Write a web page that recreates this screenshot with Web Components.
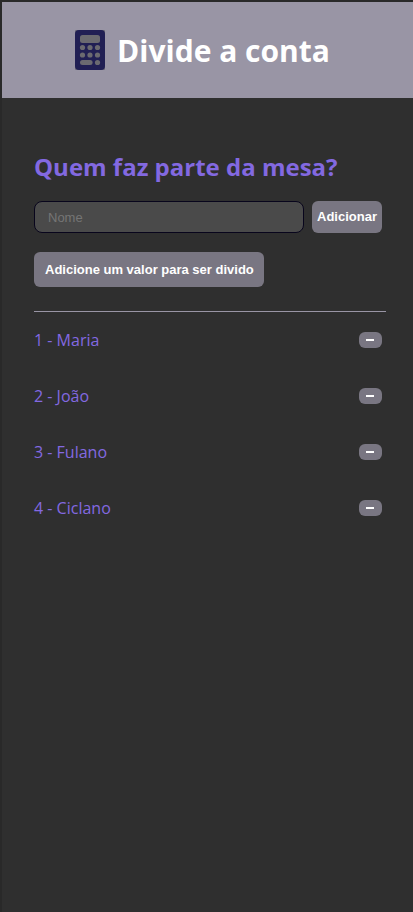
<!DOCTYPE html>
<html lang="pt-BR">
<head>
<meta charset="utf-8">
<meta name="viewport" content="width=device-width, initial-scale=1">
<title>Divide a conta</title>
<style>
  :root {
    --bg: #2f2f2f;
    --edge: #292929;
    --header: #9995a5;
    --accent: #8369e1;
    --button: #797682;
    --field: #4a4a4a;
    --line: #9995a5;
  }
  html { background: var(--bg); }
  body {
    margin: 0;
    min-height: 100vh;
    box-sizing: border-box;
    border: solid var(--edge);
    border-width: 2px 0 0 2px;
    font-family: "Open Sans", "Noto Sans", sans-serif;
    font-size: 16px;
    color: var(--accent);
  }
</style>
</head>
<body>
<bill-app></bill-app>
<script>
class BillElement extends HTMLElement {
  constructor() {
    super();
    this.attachShadow({ mode: "open" }).innerHTML = this.constructor.markup;
  }
}

customElements.define("calculator-icon", class extends BillElement {
  static markup = `
    <style>
      :host { display: block; width: 30px; height: 40px; }
      svg { display: block; width: 100%; height: 100%; }
    </style>
    <svg viewBox="0 0 30 40" aria-hidden="true">
      <rect width="30" height="40" rx="1" fill="#6e6c78"/>
      <rect width="30" height="40" rx="4" fill="#211f54"/>
      <g fill="#6b6a70">
        <rect x="5" y="5" width="20" height="8" rx="2.5"/>
        <circle cx="7.5" cy="17.5" r="2.6"/><circle cx="15" cy="17.5" r="2.6"/><circle cx="22.5" cy="17.5" r="2.6"/>
        <circle cx="7.5" cy="25" r="2.6"/><circle cx="15" cy="25" r="2.6"/><circle cx="22.5" cy="25" r="2.6"/>
        <rect x="5" y="30" width="12.6" height="5" rx="2.5"/>
        <circle cx="22.5" cy="32.5" r="2.6"/>
      </g>
    </svg>`;
});

customElements.define("app-header", class extends BillElement {
  static markup = `
    <style>
      :host { display: block; background: var(--header); color: #fff; }
      header { display: flex; align-items: center; justify-content: center; gap: 12px; min-height: 96px; padding-right: 10px; }
      h1 { margin: 0; padding-top: 2px; font-size: 30px; line-height: 44px; font-weight: 700; white-space: nowrap; }
    </style>
    <header><calculator-icon></calculator-icon><h1><slot></slot></h1></header>`;
});

customElements.define("action-button", class extends BillElement {
  static markup = `
    <style>
      :host { display: inline-block; }
      button {
        display: block; width: 100%; height: 100%; box-sizing: border-box; margin: 0; border: 0;
        padding: var(--pad, 0 12px); border-radius: var(--radius, 6px);
        background: var(--button); color: #fff;
        font: bold 13px/16px "Liberation Sans", Arial, sans-serif; white-space: nowrap; cursor: pointer;
      }
    </style>
    <button type="button"><slot></slot></button>`;
  connectedCallback() {
    if (this.hasAttribute("label"))
      this.shadowRoot.querySelector("button").setAttribute("aria-label", this.getAttribute("label"));
  }
});

customElements.define("person-form", class extends BillElement {
  static markup = `
    <style>
      :host { display: block; }
      form { display: flex; gap: 8px; padding-right: 4px; }
      input {
        flex: 1; min-width: 0; height: 32px; box-sizing: border-box; margin: 0; padding: 0 13px;
        border: 1px solid #08051c; border-radius: 8px; background: var(--field); color: #fff;
        font: 13px/16px "Liberation Sans", Arial, sans-serif;
      }
      input::placeholder { color: #757575; opacity: 1; }
      action-button { height: 32px; --pad: 0 5px; }
    </style>
    <form><input type="text" placeholder="Nome" aria-label="Nome"><action-button>Adicionar</action-button></form>`;
});

customElements.define("person-row", class extends BillElement {
  static markup = `
    <style>
      :host { display: flex; align-items: center; justify-content: space-between; height: 24px; padding-right: 4px; line-height: 24px; }
      action-button { width: 23px; height: 16px; --pad: 0 1px 0 0; }
      svg { display: block; margin: auto; }
    </style>
    <span><slot></slot></span>
    <action-button label="Remover">
      <svg width="8" height="2" viewBox="0 0 8 2" aria-hidden="true"><rect width="8" height="2" fill="#fff"/></svg>
    </action-button>`;
});

customElements.define("bill-app", class extends BillElement {
  static markup = `
    <style>
      :host { display: block; }
      main { padding: 52px 27px 32px 32px; }
      h2 { margin: 0 0 17px; font-size: 24px; line-height: 34px; font-weight: 700; white-space: nowrap; }
      .value { display: block; width: max-content; height: 35px; margin-top: 19px; --pad: 0 10px 0 11px; }
      hr { margin: 24px 0 16px; border: 0; height: 1px; background: var(--line); }
      ul { display: grid; gap: 32px; margin: 0; padding: 0; list-style: none; }
    </style>
    <app-header>Divide a conta</app-header>
    <main>
      <h2>Quem faz parte da mesa?</h2>
      <person-form></person-form>
      <action-button class="value">Adicione um valor para ser divido</action-button>
      <hr>
      <ul>
        <li><person-row>1 - Maria</person-row></li>
        <li><person-row>2 - João</person-row></li>
        <li><person-row>3 - Fulano</person-row></li>
        <li><person-row>4 - Ciclano</person-row></li>
      </ul>
    </main>`;
});
</script>
</body>
</html>
